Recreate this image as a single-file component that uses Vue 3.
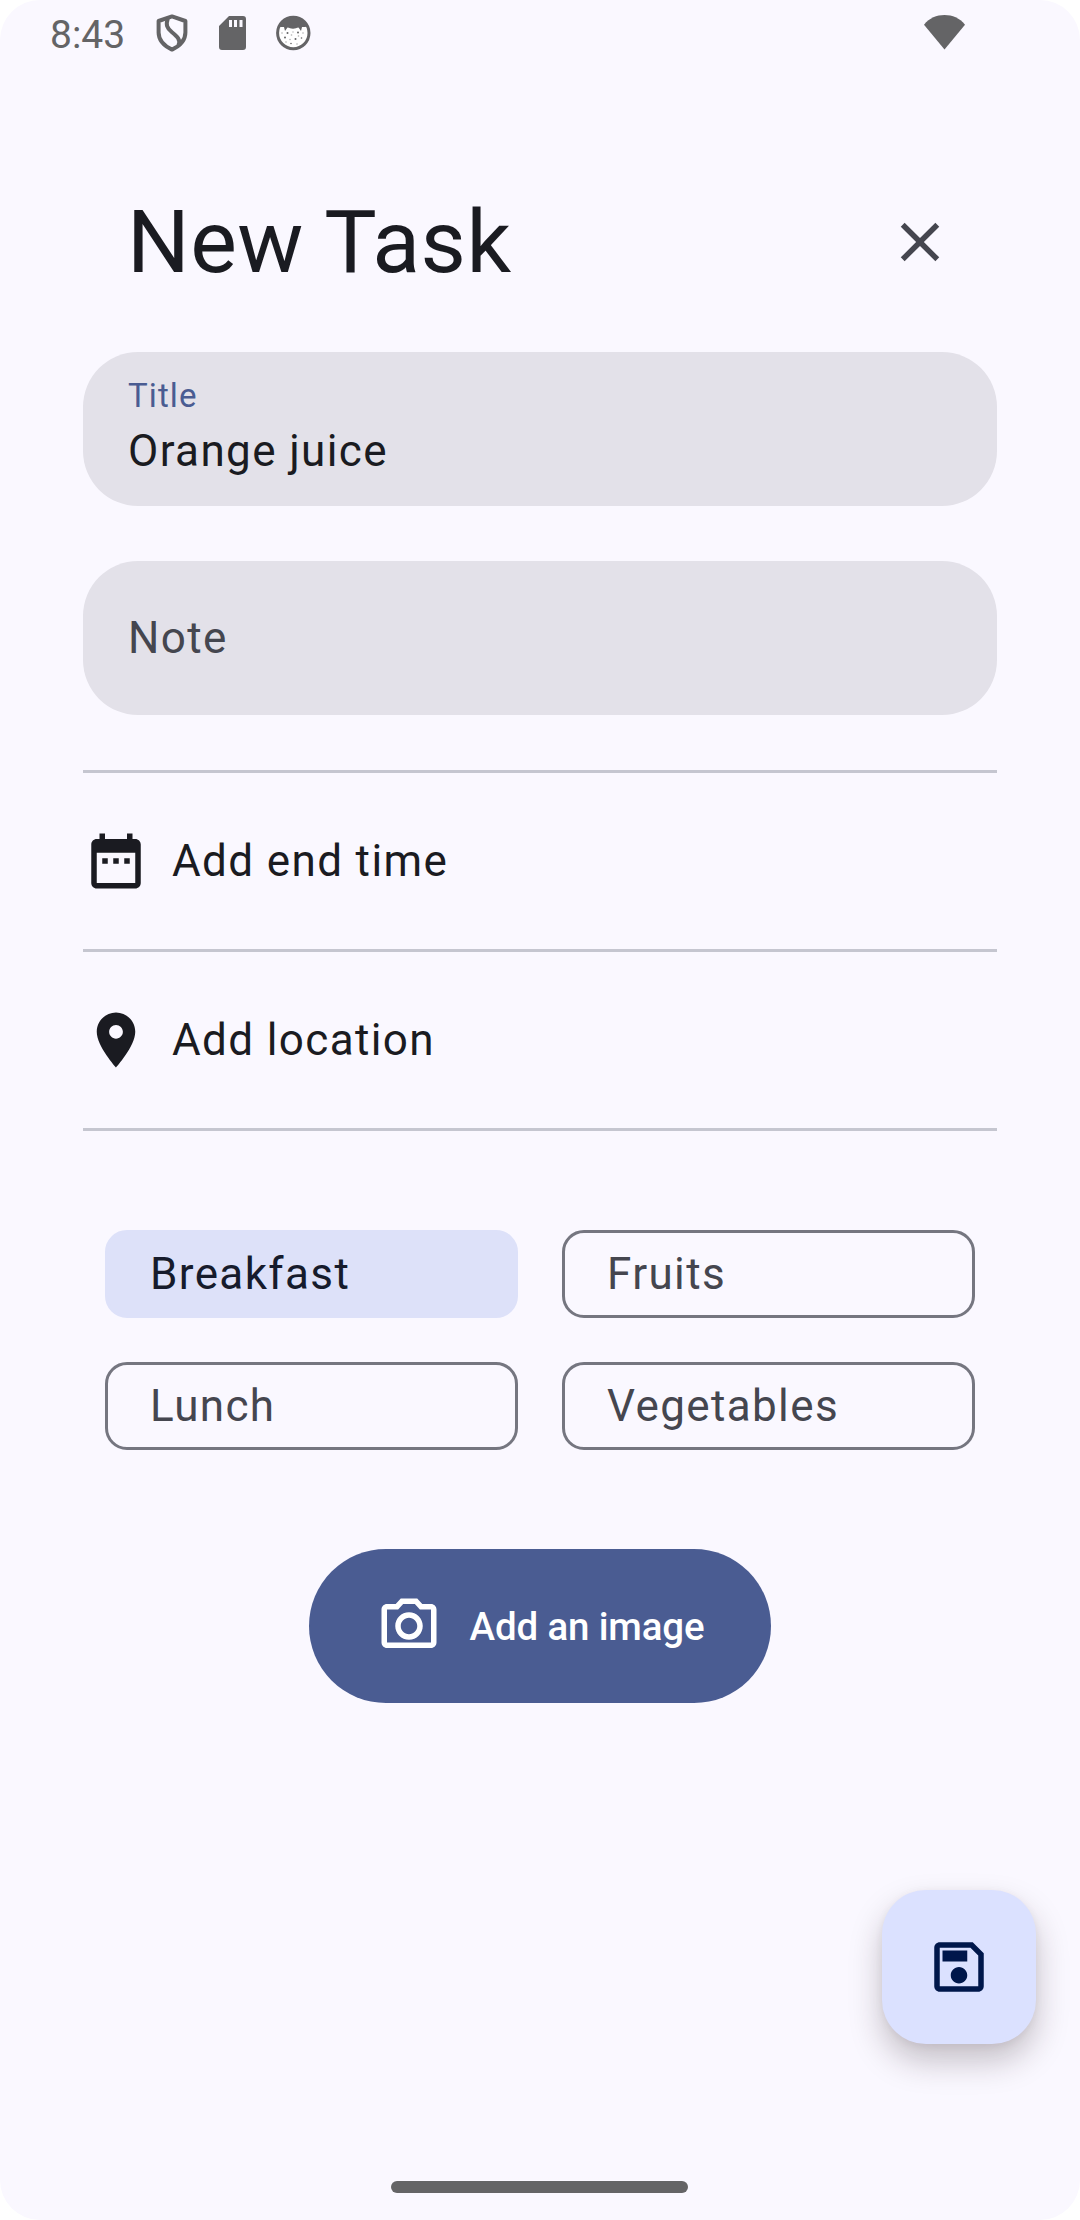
<script setup>
import { ref } from 'vue'

const title = ref('Orange juice')
const tags = ref([
  { name: 'Breakfast', selected: true },
  { name: 'Fruits', selected: false },
  { name: 'Lunch', selected: false },
  { name: 'Vegetables', selected: false },
])
const options = [
  {
    label: 'Add end time',
    icon: 'M9 11H7v2h2v-2zm4 0h-2v2h2v-2zm4 0h-2v2h2v-2zm2-7h-1V2h-2v2H8V2H6v2H5c-1.11 0-1.99.9-1.99 2L3 20c0 1.1.89 2 2 2h14c1.1 0 2-.9 2-2V6c0-1.1-.9-2-2-2zm0 16H5V9h14v11z',
  },
  {
    label: 'Add location',
    icon: 'M12 2C8.13 2 5 5.13 5 9c0 5.25 7 13 7 13s7-7.75 7-13c0-3.87-3.13-7-7-7zm0 9.5c-1.38 0-2.5-1.12-2.5-2.5s1.12-2.5 2.5-2.5 2.5 1.12 2.5 2.5-1.12 2.5-2.5 2.5z',
  },
]
</script>

<template>
  <div class="screen">
    <div class="status">
      <span class="clock">8:43</span>
      <svg class="shield" width="32" height="38" viewBox="0 0 32 38" fill="none" stroke="currentColor" stroke-width="4" stroke-linejoin="round">
        <path d="M16 2.4 2.6 7v11.5c0 7.6 5.2 13.2 13.4 17.1 8.2-3.9 13.4-9.5 13.4-17.1V7z" />
        <path d="M11.8 4.5c-2.2 6.5-.8 9.5 3.7 13.3 5.5 4.5 9.5 7.7 7 13.2" />
      </svg>
      <svg class="card" width="27" height="34" viewBox="0 0 27 34">
        <path fill="currentColor" fill-rule="evenodd" d="M10 0h14a3 3 0 0 1 3 3v28a3 3 0 0 1-3 3H3a3 3 0 0 1-3-3V10zM10 4v7h3V4zM15 4v7h3V4zM20.5 4v7h3V4z" />
      </svg>
      <svg class="face" width="36" height="36" viewBox="0 0 36 36">
        <circle cx="18.3" cy="18" r="15.7" fill="#fff" stroke="currentColor" stroke-width="3" />
        <path fill="currentColor" d="M4 11C7 5 12 2 18 2s11 3 14 9c-1.5 1.3-3.5 1.2-5 1l-1 4-2.5-3.5c-2 .2-3 1.3-5.5 1.3s-3.500-1.100-5.500-1.300L10 16 9 12c-1.500.2-3.500.3-5-1z" />
        <g fill="currentColor">
          <circle cx="12.500" cy="18" r="1" /><circle cx="23" cy="17.500" r="1" />
          <circle cx="10" cy="22.500" r="1" /><circle cx="20.500" cy="24" r="1" />
          <circle cx="26.500" cy="23" r=".8" /><circle cx="16" cy="28.500" r=".8" />
        </g>
        <g fill="currentColor" opacity=".5">
          <circle cx="7" cy="18" r=".8" /><circle cx="16.500" cy="20" r=".8" />
          <circle cx="28" cy="18" r=".8" /><circle cx="15" cy="24.500" r=".8" />
          <circle cx="23.500" cy="21" r=".8" /><circle cx="22" cy="29" r=".8" />
          <circle cx="11" cy="27" r=".8" /><circle cx="18" cy="17" r=".7" />
        </g>
      </svg>
      <svg class="wifi" width="41" height="35" viewBox="0 0 41 35">
        <path fill="currentColor" d="M0 9.7C5.5 3 12.5 0 20.5 0S35.5 3 41 9.7L20.5 34.5z" />
      </svg>
    </div>

    <header class="header">
      <h1>New Task</h1>
      <svg class="icon" viewBox="0 0 24 24">
        <path fill="currentColor" d="M19 6.41 17.59 5 12 10.59 6.41 5 5 6.41 10.59 12 5 17.59 6.41 19 12 13.41 17.59 19 19 17.59 13.41 12z" />
      </svg>
    </header>

    <main class="form">
      <div class="field">
        <span class="label">Title</span>
        <span class="value">{{ title }}</span>
      </div>
      <div class="field empty">
        <span class="placeholder">Note</span>
      </div>

      <div class="options">
        <div v-for="option in options" :key="option.label" class="option">
          <svg class="icon" viewBox="0 0 24 24"><path fill="currentColor" :d="option.icon" /></svg>
          <span>{{ option.label }}</span>
        </div>
      </div>

      <div class="tags">
        <div v-for="tag in tags" :key="tag.name" class="tag" :class="{ selected: tag.selected }" @click="tag.selected = !tag.selected">
          {{ tag.name }}
        </div>
      </div>

      <button class="image-button">
        <svg class="icon" viewBox="0 0 24 24">
          <path fill="currentColor" d="M14.12 4l1.83 2H20v12H4V6h4.05l1.83-2h4.24M15 2H9L7.17 4H4c-1.1 0-2 .9-2 2v12c0 1.1.9 2 2 2h16c1.1 0 2-.9 2-2V6c0-1.1-.9-2-2-2h-3.17L15 2zm-3 7c1.65 0 3 1.35 3 3s-1.35 3-3 3-3-1.35-3-3 1.35-3 3-3m0-2c-2.76 0-5 2.24-5 5s2.24 5 5 5 5-2.24 5-5-2.24-5-5-5z" />
        </svg>
        <span>Add an image</span>
      </button>
    </main>

    <button class="fab" aria-label="Save">
      <svg class="icon" viewBox="0 0 24 24">
        <path fill="currentColor" d="M17 3H5c-1.11 0-2 .9-2 2v14c0 1.1.89 2 2 2h14c1.1 0 2-.9 2-2V7l-4-4zm2 16H5V5h11.17L19 7.83V19zm-7-7c-1.66 0-3 1.34-3 3s1.34 3 3 3 3-1.34 3-3-1.34-3-3-3zM6 6h9v4H6V6z" />
      </svg>
    </button>
    <div class="home-bar"></div>
  </div>
</template>

<style>
body {
  margin: 0;
  background: #fff;
}
</style>

<style scoped>
.screen {
  position: relative;
  display: flex;
  flex-direction: column;
  box-sizing: border-box;
  width: 1080px;
  height: 2220px;
  border-radius: 40px;
  background: #faf8ff;
  color: #1a1b21;
  font-family: Roboto, sans-serif;
  font-size: 44px;
  letter-spacing: 1.375px;
  overflow: hidden;
}

.icon {
  display: block;
  flex: none;
  width: 66px;
  height: 66px;
}

.status {
  display: flex;
  align-items: flex-start;
  height: 161px;
  padding: 0 115px 0 50px;
  color: #646466;
}

.status svg {
  display: block;
  flex: none;
}

.clock {
  width: 105px;
  padding-top: 12px;
  font-size: 39px;
  line-height: 46px;
  letter-spacing: 0;
}

.shield {
  margin: 14px 0 0 0.5px;
}

.card {
  margin: 16px 0 0 31.5px;
}

.face {
  margin: 15px 0 0 29px;
}

.wifi {
  margin: 15px 0 0 auto;
}

.header {
  display: flex;
  align-items: center;
  justify-content: space-between;
  height: 162px;
  padding: 0 127px;
}

.header .icon {
  color: #45464f;
}

h1 {
  margin: 0;
  font-size: 88px;
  font-weight: 400;
  line-height: 110px;
  letter-spacing: 0.4px;
}

.form {
  display: flex;
  flex-direction: column;
  padding: 29px 83px 0;
}

.field {
  display: flex;
  flex-direction: column;
  box-sizing: border-box;
  height: 154px;
  padding: 22px 45px;
  margin-bottom: 55px;
  border-radius: 55px;
  background: #e3e1e9;
}

.empty {
  justify-content: center;
}

.label {
  color: #4a5c92;
  font-size: 33px;
  line-height: 44px;
  letter-spacing: 1.1px;
}

.value,
.placeholder {
  line-height: 66px;
}

.placeholder {
  color: #45464f;
}

.options {
  border-top: 3px solid #c5c6d0;
}

.option {
  display: flex;
  align-items: center;
  gap: 23px;
  height: 176px;
  border-bottom: 3px solid #c5c6d0;
}

.tags {
  display: grid;
  grid-template-columns: 1fr 1fr;
  gap: 44px;
  padding: 99px 22px;
}

.tag {
  box-sizing: border-box;
  height: 88px;
  padding-left: 42px;
  border: 3px solid #757680;
  border-radius: 22px;
  color: #45464f;
  line-height: 82px;
}

.selected {
  border-color: #dde1f9;
  background: #dde1f9;
  color: #161b2c;
}

button {
  display: flex;
  align-items: center;
  justify-content: center;
  border: 0;
  font: inherit;
}

.image-button {
  align-self: center;
  gap: 28px;
  width: 462px;
  height: 154px;
  padding: 0;
  border-radius: 77px;
  background: #4a5c92;
  color: #fff;
  font-size: 38.5px;
  font-weight: 500;
  letter-spacing: -0.15px;
}

.fab {
  position: absolute;
  right: 44px;
  bottom: 176px;
  width: 154px;
  height: 154px;
  padding: 0;
  border-radius: 44px;
  background: #dbe1ff;
  color: #00174b;
  box-shadow: 0 17px 32px rgba(40, 25, 30, 0.25), 0 2px 8px rgba(40, 25, 30, 0.06);
}

.home-bar {
  width: 297px;
  height: 12px;
  margin: auto auto 27px 391px;
  border-radius: 6px;
  background: #646466;
}
</style>
